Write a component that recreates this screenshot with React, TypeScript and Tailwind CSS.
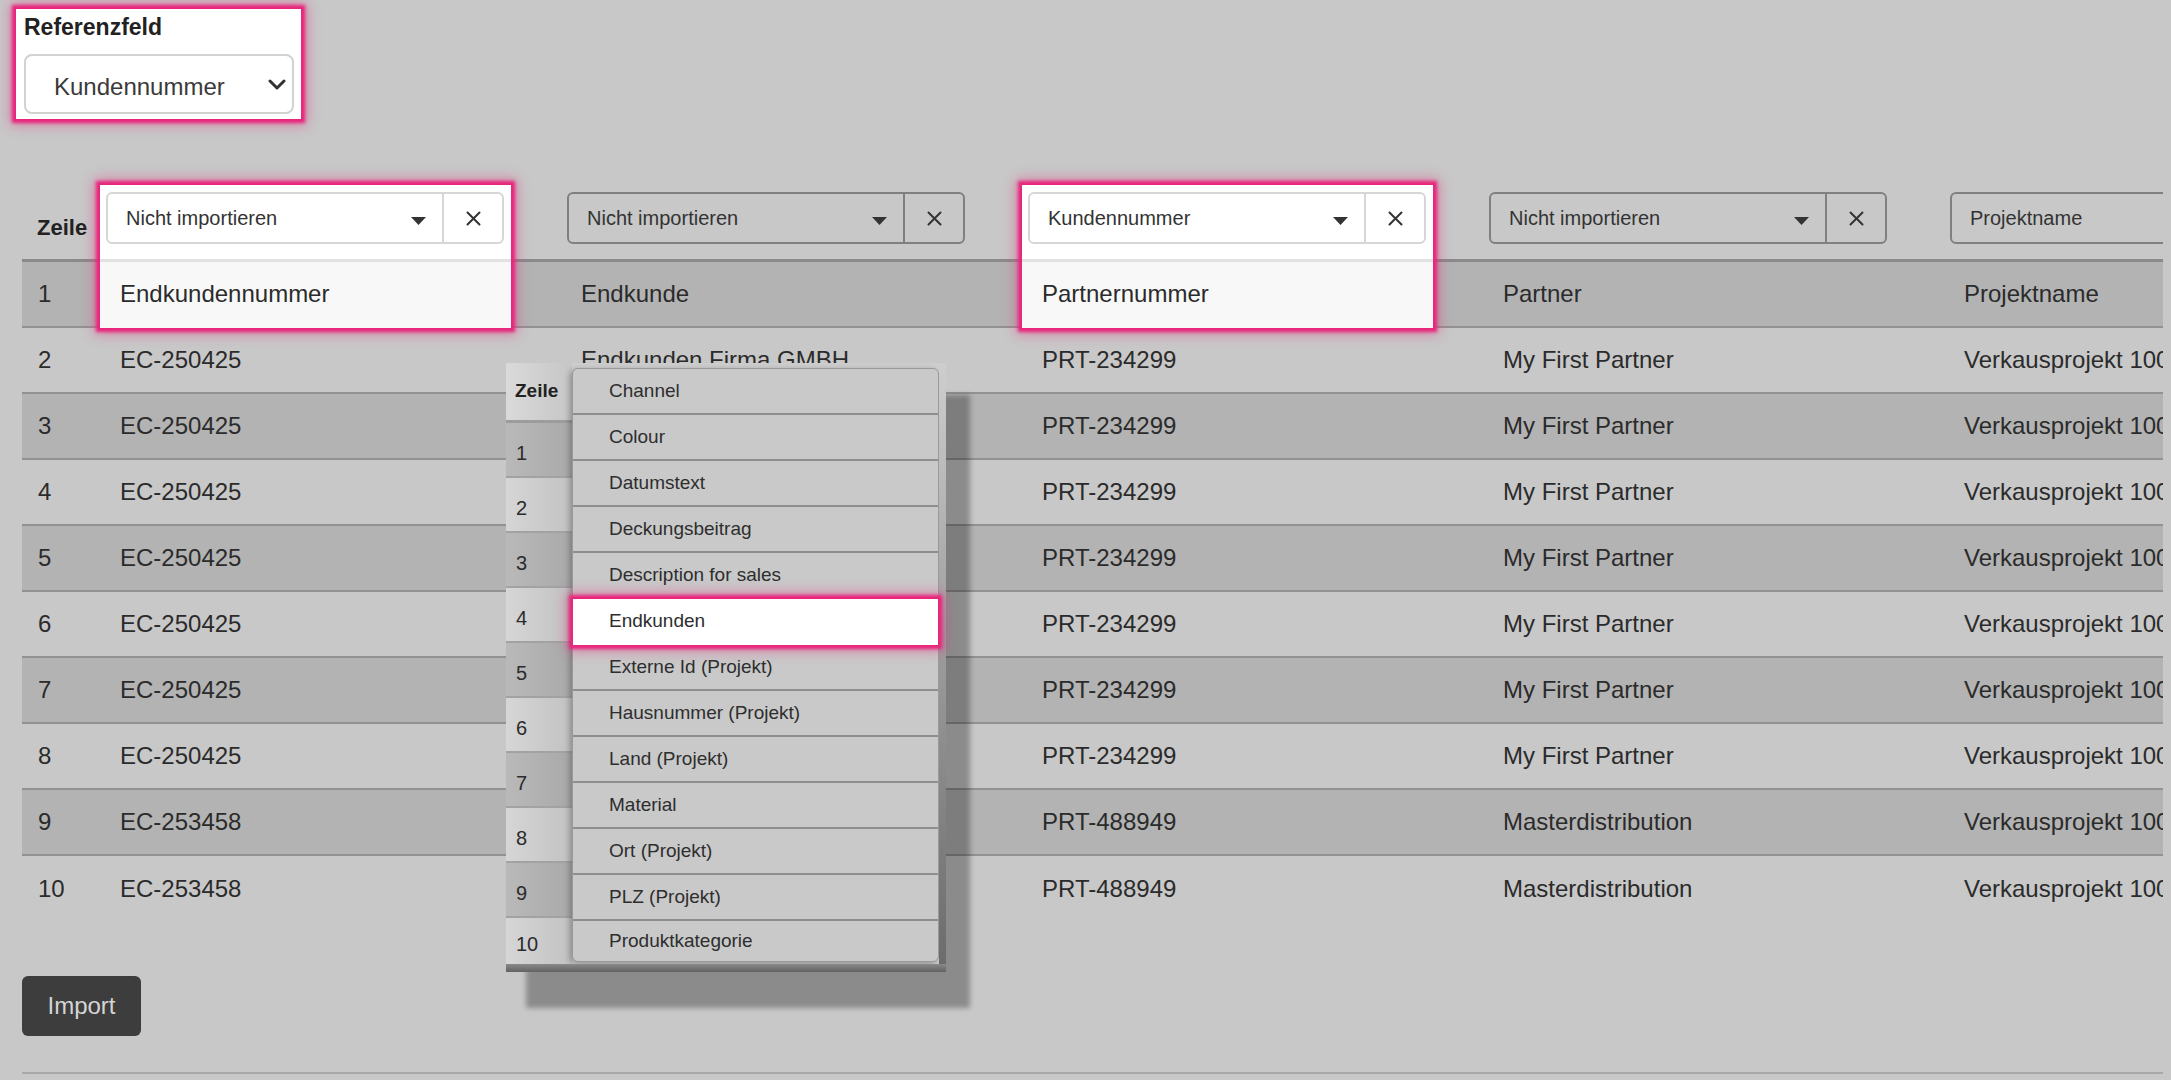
import React from 'react';

const glow =
  'shadow-[0_0_3px_4px_#e8277c,0_0_12px_6px_rgba(232,39,124,0.45)]';

const headerCols = [
  { label: 'Nicht importieren', active: true },
  { label: 'Nicht importieren', active: false },
  { label: 'Kundennummer', active: true },
  { label: 'Nicht importieren', active: false },
  { label: 'Projektname', active: false },
];

const rows = [
  ['Endkundennummer', 'Endkunde', 'Partnernummer', 'Partner', 'Projektname'],
  ['EC-250425', 'Endkunden Firma GMBH', 'PRT-234299', 'My First Partner', 'Verkausprojekt 1001'],
  ['EC-250425', 'Endkunden Firma GMBH', 'PRT-234299', 'My First Partner', 'Verkausprojekt 1001'],
  ['EC-250425', 'Endkunden Firma GMBH', 'PRT-234299', 'My First Partner', 'Verkausprojekt 1001'],
  ['EC-250425', 'Endkunden Firma GMBH', 'PRT-234299', 'My First Partner', 'Verkausprojekt 1001'],
  ['EC-250425', 'Endkunden Firma GMBH', 'PRT-234299', 'My First Partner', 'Verkausprojekt 1001'],
  ['EC-250425', 'Endkunden Firma GMBH', 'PRT-234299', 'My First Partner', 'Verkausprojekt 1001'],
  ['EC-250425', 'Endkunden Firma GMBH', 'PRT-234299', 'My First Partner', 'Verkausprojekt 1001'],
  ['EC-253458', 'Endkunden Firma AG', 'PRT-488949', 'Masterdistribution', 'Verkausprojekt 1002'],
  ['EC-253458', 'Endkunden Firma AG', 'PRT-488949', 'Masterdistribution', 'Verkausprojekt 1002'],
];

const menuItems = [
  'Channel',
  'Colour',
  'Datumstext',
  'Deckungsbeitrag',
  'Description for sales',
  'Endkunden',
  'Externe Id (Projekt)',
  'Hausnummer (Projekt)',
  'Land (Projekt)',
  'Material',
  'Ort (Projekt)',
  'PLZ (Projekt)',
  'Produktkategorie',
];

const Caret = () => (
  <svg width="15" height="8" viewBox="0 0 15 8">
    <path d="M0 0 H15 L7.5 8 Z" fill="#333" />
  </svg>
);

const Cross = () => (
  <svg width="15" height="15" viewBox="0 0 15 15">
    <path d="M1.5 1.5 L13.5 13.5 M13.5 1.5 L1.5 13.5" stroke="#333" strokeWidth="2" strokeLinecap="round" />
  </svg>
);

function ColumnSelect({ label, active }: { label: string; active: boolean }) {
  return (
    <div
      className={`flex w-[398px] h-[52px] rounded-[6px] border-2 ${
        active ? 'bg-white border-[#d6d6d6]' : 'border-[#808080]'
      }`}
    >
      <div className="flex-1 flex items-center justify-between pl-[18px] pr-[16px]">
        <span className="text-[20px] text-[#333]">{label}</span>
        <span className="mt-[6px]">
          <Caret />
        </span>
      </div>
      <div
        className={`w-[60px] flex items-center justify-center border-l-2 ${
          active ? 'border-[#d6d6d6]' : 'border-[#808080]'
        }`}
      >
        <Cross />
      </div>
    </div>
  );
}

function App() {
  return (
    <div className="relative w-full h-[1080px] overflow-hidden bg-[#c8c8c8] text-[#2b2b2b] font-['Liberation_Sans',Arial,sans-serif]">
      {/* Referenzfeld */}
      <div className="pt-[9px] pl-[16px]">
        <div className={`w-[285px] h-[110px] bg-white px-[8px] pt-[4px] ${glow}`}>
          <div className="text-[23px] leading-[28px] font-bold text-[#222]">Referenzfeld</div>
          <div className="mt-[13px] w-[270px] h-[60px] flex items-center justify-between rounded-[8px] border-2 border-[#d2d2d2] pl-[28px] pr-[6px]">
            <span className="text-[24px] text-[#3a3a3a] mt-[6px]">Kundennummer</span>
            <svg width="18" height="11" viewBox="0 0 18 11">
              <polyline points="2,2 9,9 16,2" fill="none" stroke="#333" strokeWidth="3" strokeLinecap="round" strokeLinejoin="round" />
            </svg>
          </div>
        </div>
      </div>

      {/* Table */}
      <div className="relative mt-[41px] ml-[22px] w-[2141px] pt-[25px] overflow-hidden">
        {/* header */}
        <div className="flex">
          <div className="w-[78px] shrink-0 h-[77px] flex items-end pl-[15px] pb-[17px] border-b-[3px] border-[#8a8a8a]">
            <span className="text-[22px] leading-[28px] font-bold text-[#222]">Zeile</span>
          </div>
          {headerCols.map((c, i) => (
            <div key={i} className="flex w-[461px] shrink-0">
              <div
                className={`w-[411px] h-[77px] pt-[7px] pl-[6px] border-b-[3px] ${
                  c.active ? 'bg-white border-[#e2e2e2]' : 'border-[#8a8a8a]'
                }`}
              >
                <ColumnSelect label={c.label} active={c.active} />
              </div>
              <div className="w-[50px] border-b-[3px] border-[#8a8a8a]" />
            </div>
          ))}
        </div>

        {/* body */}
        {rows.map((r, ri) => {
          const last = ri === rows.length - 1;
          const border = last ? '' : 'border-b-2 border-[#929292]';
          return (
            <div key={ri} className={`flex text-[24px] ${ri % 2 === 0 ? 'bg-[#b3b3b3]' : ''}`}>
              <div className={`w-[78px] shrink-0 h-[66px] flex items-center pl-[16px] ${border}`}>{ri + 1}</div>
              {r.map((cell, ci) => {
                const hl = ri === 0 && headerCols[ci].active;
                return (
                  <div key={ci} className="flex w-[461px] shrink-0">
                    <div
                      className={`w-[411px] h-[66px] flex items-center pl-[20px] whitespace-nowrap ${
                        hl ? 'bg-[#f8f8f8] border-b-2 border-[#f8f8f8]' : border
                      }`}
                    >
                      {cell}
                    </div>
                    <div className={`w-[50px] h-[66px] ${border}`} />
                  </div>
                );
              })}
            </div>
          );
        })}

        {/* highlight frames */}
        <div className={`absolute pointer-events-none top-[25px] left-[78px] w-[411px] h-[143px] ${glow}`} />
        <div className={`absolute pointer-events-none top-[25px] left-[1000px] w-[411px] h-[143px] ${glow}`} />
      </div>

      {/* Import */}
      <div className="ml-[22px] mt-[54px]">
        <button className="w-[119px] h-[60px] rounded-[6px] bg-[#3d3d3d] text-[24px] text-[#d4d4d4]">Import</button>
      </div>
      <div className="ml-[22px] mt-[36px] w-[2141px] border-t-2 border-[#a8a8a8]" />

      {/* magnified dropdown inset */}
      <div className="absolute left-[506px] top-[363px] w-[440px] h-[609px] flex flex-col bg-[#cecece] shadow-[22px_34px_5px_2px_rgba(0,0,0,0.3)]">
        <div className="flex flex-1">
          <div className="w-[66px] shrink-0 flex flex-col">
            <div className="h-[60px] flex items-center pl-[9px] bg-gradient-to-r from-[#dadada] to-[#c6c6c6] border-b-[3px] border-[#9c9c9c]">
              <span className="text-[19px] font-bold text-[#222]">Zeile</span>
            </div>
            {Array.from({ length: 10 }).map((_, i) => (
              <div
                key={i}
                className={`${i === 9 ? 'h-[46px]' : 'h-[55px]'} flex items-center pl-[10px] pt-[6px] text-[20px] text-[#2b2b2b] ${
                  i === 9 ? '' : 'border-b-2 border-[#a2a2a2]'
                } ${i % 2 === 0 ? 'bg-gradient-to-r from-[#b9b9b9] to-[#a9a9a9]' : 'bg-gradient-to-r from-[#d6d6d6] to-[#c2c2c2]'}`}
              >
                {i + 1}
              </div>
            ))}
          </div>
          <div className="flex-1 pt-[5px]">
            <div className="w-[367px] rounded-[6px] border border-[#9a9a9a] bg-[#c9c9c9] shadow-[-2px_2px_6px_rgba(0,0,0,0.3)]">
              {menuItems.map((m, i) => {
                const active = m === 'Endkunden';
                const lastItem = i === menuItems.length - 1;
                return (
                  <div
                    key={m}
                    className={`flex items-center pl-[36px] text-[19px] text-[#2e2e2e] overflow-hidden ${
                      lastItem ? 'h-[40px] rounded-b-[6px] items-start pt-[6px]' : 'h-[46px] border-b-2 border-[#8e8e8e]'
                    } ${i === 0 ? 'rounded-t-[6px]' : ''} ${active ? `relative z-10 bg-white border-white ${glow}` : ''}`}
                  >
                    {m}
                  </div>
                );
              })}
            </div>
          </div>
          <div className="w-[7px] bg-gradient-to-b from-[#cecece] via-[#9a9a9a] to-[#6c6c6c]" />
        </div>
        <div className="h-[8px] bg-gradient-to-b from-[#8a8a8a] to-[#626262]" />
      </div>
    </div>
  );
}

export default App;
